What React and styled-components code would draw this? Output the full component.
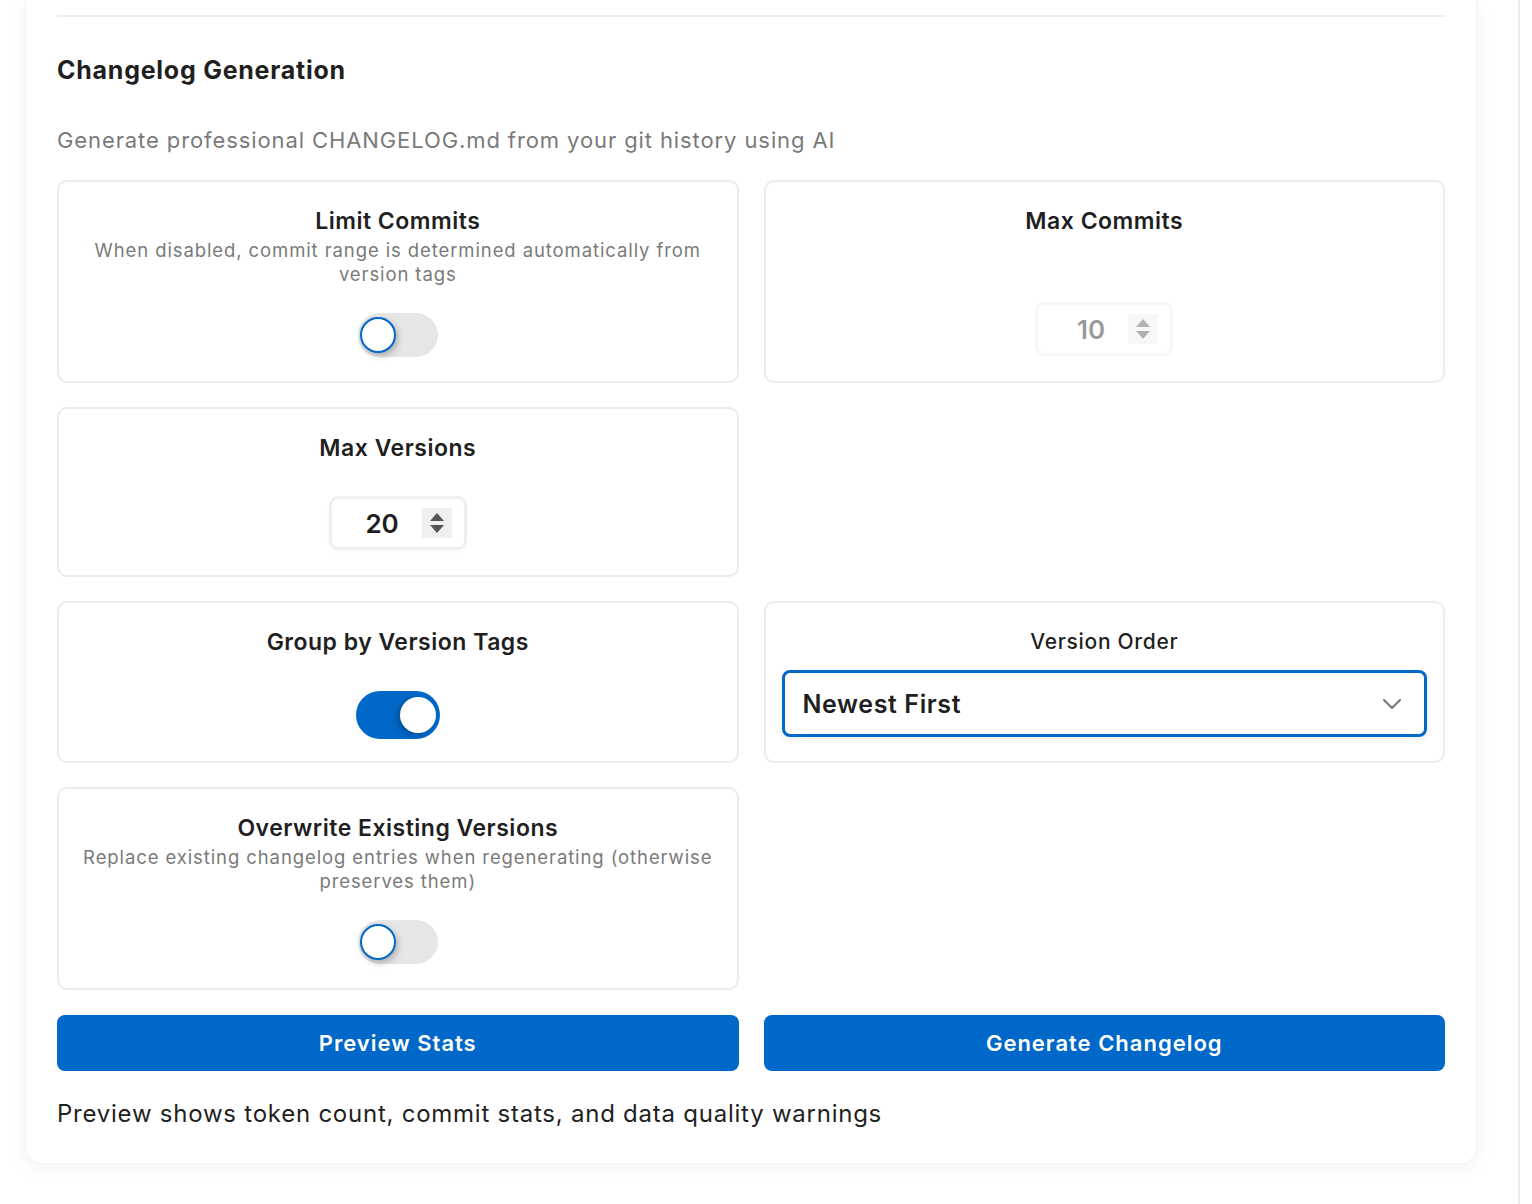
import React, { useState } from 'react';
import styled, { createGlobalStyle } from 'styled-components';

const GlobalStyle = createGlobalStyle`
  html, body {
    margin: 0;
    padding: 0;
    background: #ffffff;
    font-family: Inter, "Noto Sans", "Liberation Sans", sans-serif;
    color: #1f1f1f;
  }
`;

const Page = styled.div`
  display: flex;
  min-height: 1204px;
`;

const Main = styled.div`
  flex: 1;
  padding: 0 41px 40px 25px;
`;

const ScrollTrack = styled.div`
  width: 12px;
  border-left: 2px solid #ececec;
`;

const Panel = styled.section`
  background: #fff;
  border: 1px solid #f2f2f2;
  border-top: none;
  border-radius: 0 0 16px 16px;
  box-shadow: 0 4px 18px rgba(0, 0, 0, 0.05);
  padding: 15px 31px 32px;
`;

const Divider = styled.hr`
  border: none;
  border-top: 2px solid #eeeeee;
  margin: 0 0 35px;
`;

const Title = styled.h2`
  margin: 0 0 37px;
  font-size: 25px;
  font-weight: 700;
  line-height: 36px;
  letter-spacing: 0.75px;
  color: #1f1f1f;
`;

const Subtitle = styled.p`
  margin: 0 0 25px;
  font-size: 22px;
  line-height: 30px;
  letter-spacing: 0.9px;
  color: #7a7a7a;
`;

const Grid = styled.div`
  display: grid;
  grid-template-columns: 1fr 1fr;
  gap: 24px 25px;
`;

const Card = styled.div`
  border: 2px solid #ececec;
  border-radius: 10px;
  padding: 24px 16px;
  display: flex;
  flex-direction: column;
  align-items: ${p => (p.$wide ? 'stretch' : 'center')};
  justify-content: space-between;
  text-align: center;
`;

const Head = styled.div`
  display: flex;
  flex-direction: column;
  align-items: center;
`;

const Label = styled.div`
  font-size: 23px;
  line-height: 30px;
  font-weight: 600;
  letter-spacing: 0.5px;
  color: #1f1f1f;
`;

const PlainLabel = styled.div`
  font-size: 21px;
  line-height: 30px;
  font-weight: 500;
  letter-spacing: 0.7px;
  color: #1f1f1f;
  margin-bottom: 13px;
`;

const Hint = styled.div`
  margin-top: 2px;
  padding: 0 4px;
  font-size: 18.5px;
  line-height: 24px;
  letter-spacing: 0.9px;
  color: #7a7a7a;
`;

const Track = styled.button`
  margin-top: ${p => p.$gap}px;
  width: 80px;
  height: 44px;
  flex-shrink: 0;
  border-radius: 22px;
  border: none;
  padding: 0;
  position: relative;
  background: ${p => (p.$on ? '#0068c9' : '#e6e6e6')};
  box-shadow: ${p => (p.$on ? '0 0 0 2px #0068c9' : 'none')};
  cursor: pointer;
`;

const Knob = styled.span`
  position: absolute;
  top: 50%;
  transform: translateY(-50%);
  left: ${p => (p.$on ? '42px' : '2px')};
  width: 36px;
  height: 36px;
  box-sizing: border-box;
  border-radius: 50%;
  background: #fff;
  border: ${p => (p.$on ? 'none' : '2.5px solid #0068c9')};
  box-shadow: ${p => (p.$on ? '-3px 2px 6px rgba(0,0,0,0.25)' : '2px 3px 6px rgba(0,0,0,0.25)')};
`;

const NumberBox = styled.div`
  margin: ${p => p.$gap}px 0 4px;
  width: 132px;
  height: 48px;
  box-sizing: border-box;
  border-radius: 6px;
  background: #fff;
  box-shadow: 0 0 0 3px #efefef, 0 2px 6px rgba(0, 0, 0, 0.06);
  display: flex;
  align-items: center;
  justify-content: flex-end;
  padding-right: 12px;
  gap: 23px;
  opacity: ${p => (p.$disabled ? 0.45 : 1)};
`;

const NumberValue = styled.span`
  font-size: 26px;
  font-weight: 600;
  color: #1f1f1f;
`;

const Spinner = styled.span`
  width: 30px;
  height: 30px;
  background: #efefef;
  display: flex;
  flex-direction: column;
  align-items: center;
  justify-content: center;
  gap: 4px;
`;

const Arrow = styled.span`
  width: 0;
  height: 0;
  border-left: 7px solid transparent;
  border-right: 7px solid transparent;
  ${p => (p.$up ? 'border-bottom' : 'border-top')}: 8px solid #555;
`;

const Select = styled.div`
  height: 67px;
  box-sizing: border-box;
  border: 3px solid #0068c9;
  border-radius: 8px;
  display: flex;
  align-items: center;
  justify-content: space-between;
  padding: 0 22px 0 18px;
  font-size: 25px;
  font-weight: 600;
  letter-spacing: 0.6px;
  color: #1f1f1f;
  box-shadow: 0 2px 6px rgba(0, 0, 0, 0.08);
`;

const Empty = styled.div``;

const Actions = styled.div`
  display: grid;
  grid-template-columns: 1fr 1fr;
  gap: 25px;
  margin-top: 25px;
`;

const Button = styled.button`
  height: 56px;
  border: none;
  border-radius: 8px;
  background: #0068c9;
  color: #fff;
  font-family: inherit;
  font-size: 22px;
  font-weight: 600;
  letter-spacing: 1px;
  cursor: pointer;
`;

const Footnote = styled.p`
  margin: 26px 0 0;
  font-size: 24px;
  line-height: 34px;
  letter-spacing: 0.76px;
  color: #1f1f1f;
`;

function Toggle({ on, gap, onClick }) {
  return (
    <Track $on={on} $gap={gap} onClick={onClick}>
      <Knob $on={on} />
    </Track>
  );
}

function NumberInput({ value, gap, disabled }) {
  return (
    <NumberBox $gap={gap} $disabled={disabled}>
      <NumberValue>{value}</NumberValue>
      <Spinner>
        <Arrow $up />
        <Arrow />
      </Spinner>
    </NumberBox>
  );
}

export default function App() {
  const [limit, setLimit] = useState(false);
  const [group, setGroup] = useState(true);
  const [overwrite, setOverwrite] = useState(false);

  return (
    <Page>
      <GlobalStyle />
      <Main>
        <Panel>
          <Divider />
          <Title>Changelog Generation</Title>
          <Subtitle>Generate professional CHANGELOG.md from your git history using AI</Subtitle>
          <Grid>
            <Card>
              <Head>
                <Label>Limit Commits</Label>
                <Hint>When disabled, commit range is determined automatically from version tags</Hint>
              </Head>
              <Toggle on={limit} gap={27} onClick={() => setLimit(!limit)} />
            </Card>
            <Card>
              <Head>
                <Label>Max Commits</Label>
              </Head>
              <NumberInput value={10} gap={30} disabled />
            </Card>
            <Card>
              <Head>
                <Label>Max Versions</Label>
              </Head>
              <NumberInput value={20} gap={36} />
            </Card>
            <Empty />
            <Card>
              <Head>
                <Label>Group by Version Tags</Label>
              </Head>
              <Toggle on={group} gap={36} onClick={() => setGroup(!group)} />
            </Card>
            <Card $wide>
              <PlainLabel>Version Order</PlainLabel>
              <Select>
                Newest First
                <svg width="20" height="12" viewBox="0 0 20 12" fill="none">
                  <path d="M2 2l8 8 8-8" stroke="#777" strokeWidth="2" strokeLinecap="round" strokeLinejoin="round" />
                </svg>
              </Select>
            </Card>
            <Card>
              <Head>
                <Label>Overwrite Existing Versions</Label>
                <Hint>Replace existing changelog entries when regenerating (otherwise preserves them)</Hint>
              </Head>
              <Toggle on={overwrite} gap={27} onClick={() => setOverwrite(!overwrite)} />
            </Card>
            <Empty />
          </Grid>
          <Actions>
            <Button>Preview Stats</Button>
            <Button>Generate Changelog</Button>
          </Actions>
          <Footnote>Preview shows token count, commit stats, and data quality warnings</Footnote>
        </Panel>
      </Main>
      <ScrollTrack />
    </Page>
  );
}
